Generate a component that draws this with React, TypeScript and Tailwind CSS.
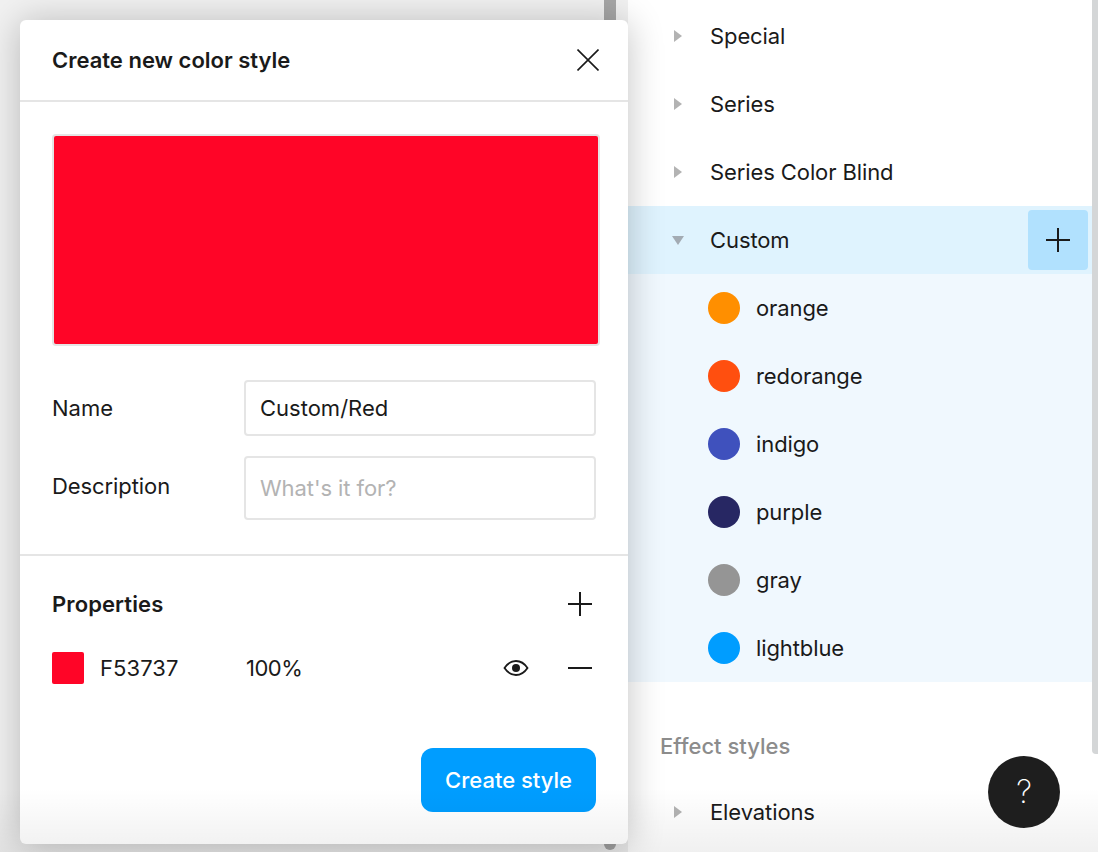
import React from "react";

const font = { fontFamily: "Inter, 'Noto Sans', sans-serif" };

const swatches = [
  { name: "orange", color: "bg-[#ff8f00]" },
  { name: "redorange", color: "bg-[#ff4f0f]" },
  { name: "indigo", color: "bg-[#3f51bd]" },
  { name: "purple", color: "bg-[#272763]" },
  { name: "gray", color: "bg-[#959595]" },
  { name: "lightblue", color: "bg-[#009dff]" },
];

const Plus = ({ size = 24 }: { size?: number }) => (
  <svg width={size} height={size} viewBox="0 0 24 24" fill="none" stroke="#1a1a1a" strokeWidth="2">
    <path d="M0 12H24M12 0V24" />
  </svg>
);

const Arrow = () => (
  <svg width="8" height="12" viewBox="0 0 8 12" className="ml-[46px] mr-[28px]">
    <path d="M0 0L8 6L0 12Z" fill="#b3b3b3" />
  </svg>
);

const Group = ({ label }: { label: string }) => (
  <div className="flex h-[68px] items-center text-[22px] tracking-[-0.1px] text-[#1a1a1a]">
    <Arrow />
    <span>{label}</span>
  </div>
);

const App: React.FC = () => {
  return (
    <div style={font} className="relative flex h-[852px] w-[1098px] overflow-hidden bg-white">
      {/* page behind the modal */}
      <div className="flex h-full w-[628px] justify-end bg-[#f1f1f1] pr-[12px]">
        <div className="h-[850px] w-[12px] rounded-b-full bg-[#a6a6a6]" />
      </div>

      <div className="flex-1 pt-[2px]">
        <Group label="Special" />
        <Group label="Series" />
        <Group label="Series Color Blind" />
        <div className="flex h-[68px] items-center bg-[#dff3fe] pr-[10px] text-[22px] tracking-[-0.1px] text-[#1a1a1a]">
          <svg width="12" height="9" viewBox="0 0 12 9" className="ml-[44px] mr-[26px]">
            <path d="M0 0H12L6 9Z" fill="#a3abb3" />
          </svg>
          <span>Custom</span>
          <button className="ml-auto flex h-[60px] w-[60px] items-center justify-center rounded-[4px] bg-[#b1e1fe]">
            <Plus />
          </button>
        </div>
        <div className="bg-[#f0f8fe]">
          {swatches.map((s) => (
            <div key={s.name} className="flex h-[68px] items-center gap-4 pl-[80px] text-[22px] tracking-[-0.1px] text-[#1a1a1a]">
              <div className={`h-8 w-8 rounded-full ${s.color}`} />
              <span>{s.name}</span>
            </div>
          ))}
        </div>
        <div className="flex h-[96px] items-end pb-[15px] pl-[32px] text-[22px] font-medium text-[#8c8c8c]">
          Effect styles
        </div>
        <Group label="Elevations" />
      </div>

      {/* right scrollbar */}
      <div className="absolute right-0 top-0 h-[754px] w-[6px] rounded-bl-[4px] bg-[#d4d6d7]" />

      {/* soft fade at the bottom */}
      <div className="pointer-events-none absolute bottom-0 left-0 z-20 h-[64px] w-full bg-gradient-to-b from-transparent to-[#0000000f]" />

      {/* modal */}
      <div className="absolute left-[20px] top-[20px] z-10 flex h-[824px] w-[608px] flex-col rounded-[6px] bg-white text-[#1a1a1a] shadow-[0_2px_36px_rgba(0,0,0,0.24)]">
        <div className="flex h-[82px] shrink-0 items-center justify-between border-b-2 border-[#e5e5e5] pl-[32px] pr-[29px]">
          <h1 className="text-[22px] font-semibold">Create new color style</h1>
          <svg width="22" height="22" viewBox="0 0 22 22" fill="none" stroke="#1a1a1a" strokeWidth="1.6">
            <path d="M0.5 0.5L21.5 21.5M21.5 0.5L0.5 21.5" />
          </svg>
        </div>

        <div className="px-[32px] pt-[32px]">
          <div className="h-[212px] w-[548px] rounded-[4px] border-2 border-[#e5e5e5] bg-[#ff0527]" />
        </div>

        <div className="flex items-center pl-[32px] pr-[32px] pt-[34px] text-[22px]">
          <label className="w-[192px]">Name</label>
          <input
            readOnly
            value="Custom/Red"
            className="h-[56px] w-[352px] rounded-[4px] border-2 border-[#e5e5e5] px-[14px] outline-none"
          />
        </div>

        <div className="flex pl-[32px] pr-[32px] pt-[20px] text-[22px] tracking-[-0.08px]">
          <label className="w-[192px] pt-[14px]">Description</label>
          <input
            readOnly
            placeholder="What's it for?"
            className="h-[64px] w-[352px] rounded-[4px] border-2 border-[#e5e5e5] px-[14px] outline-none placeholder:text-[#b3b3b3]"
          />
        </div>

        <div className="mt-[34px] border-t-2 border-[#e5e5e5] px-[32px] pt-[32px]">
          <div className="flex h-[32px] items-center justify-between pr-[4px]">
            <h2 className="text-[22px] font-semibold tracking-[0.1px]">Properties</h2>
            <Plus />
          </div>
          <div className="mt-[32px] flex h-[32px] items-center text-[22px]">
            <div className="h-8 w-8 rounded-[2px] bg-[#ff0527]" />
            <span className="ml-4 w-[146px] tracking-[0.08px]">F53737</span>
            <span className="tracking-[-0.5px]">100%</span>
            <svg width="26" height="18" viewBox="0 0 26 18" className="ml-auto mr-[39px]" fill="none">
              <path d="M1.5 9C4.5 4.5 8.5 2 13 2C17.5 2 21.5 4.5 24.5 9C21.5 13.5 17.5 16 13 16C8.5 16 4.5 13.5 1.5 9Z" stroke="#1a1a1a" strokeWidth="1.8" />
              <circle cx="13" cy="9" r="4" fill="#1a1a1a" />
            </svg>
            <div className="mr-[4px] h-[2px] w-[24px] bg-[#1a1a1a]" />
          </div>
        </div>

        <div className="mt-auto flex justify-end pb-[32px] pr-[32px]">
          <button className="h-[64px] w-[175px] rounded-[12px] bg-[#009dff] text-[22px] font-medium text-white">
            Create style
          </button>
        </div>
      </div>

      {/* help */}
      <div className="absolute left-[988px] top-[756px] z-30 flex h-[72px] w-[72px] items-center justify-center rounded-full bg-[#1e1e1e] text-[32px] font-extralight text-white">
        ?
      </div>
    </div>
  );
};

export default App;
